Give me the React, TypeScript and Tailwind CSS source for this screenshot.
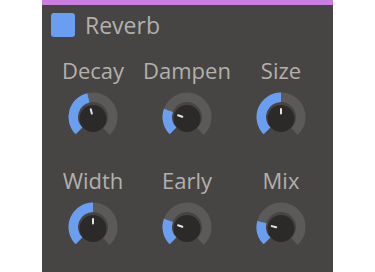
import React from 'react'

type KnobProps = { value: number }

// value 0..1 maps onto a 270° sweep starting bottom-left
function Knob({ value }: KnobProps) {
  const cx = 26
  const cy = 26
  const r = 19.75
  const start = -135
  const end = start + 270 * value
  const pt = (deg: number, rad: number, oy = 0) => {
    const a = (deg * Math.PI) / 180
    return [cx + rad * Math.sin(a), cy + oy - rad * Math.cos(a)]
  }
  const arc = (a0: number, a1: number) => {
    const [x0, y0] = pt(a0, r)
    const [x1, y1] = pt(a1, r)
    const large = a1 - a0 > 180 ? 1 : 0
    return `M ${x0} ${y0} A ${r} ${r} 0 ${large} 1 ${x1} ${y1}`
  }
  const [px0, py0] = pt(end, 5, 1.5)
  const [px1, py1] = pt(end, 9.5, 1.5)

  return (
    <svg width="52" height="52" viewBox="0 0 52 52">
      <path d={arc(start, 137)} fill="none" stroke="#5b5a58" strokeWidth="9.5" />
      {value > 0 && <path d={arc(start, end)} fill="none" stroke="#6a9ef0" strokeWidth="9.5" />}
      <circle cx={cx} cy={cy + 1.5} r="13.5" fill="#2b2a29" />
      <line x1={px0} y1={py0} x2={px1} y2={py1} stroke="#e6e4e0" strokeWidth="2" strokeLinecap="round" />
    </svg>
  )
}

const rows = [
  [
    { label: 'Decay', value: 0.45 },
    { label: 'Dampen', value: 0.24 },
    { label: 'Size', value: 0.5 },
  ],
  [
    { label: 'Width', value: 0.5 },
    { label: 'Early', value: 0.24 },
    { label: 'Mix', value: 0.22 },
  ],
]

export default function App() {
  return (
    <div className="h-[272px] w-[375px] overflow-hidden bg-white" style={{ fontFamily: '"Open Sans", sans-serif' }}>
      <div className="ml-[42px] h-[272px] w-[291px] bg-[#464543]">
        <div className="h-[5px] bg-[#c97ee0]" />
        <div className="flex items-center gap-[10px] pl-[9px] pt-[8px]">
          <div className="h-[24px] w-[24px] rounded-[3px] bg-[#6a9ef0]" />
          <span className="text-[23px] leading-[24px] text-[#b3b0ad]">Reverb</span>
        </div>
        <div className="ml-[4px] mt-[20px] flex flex-col gap-[24px]">
          {rows.map((row, i) => (
            <div key={i} className="grid w-[282px] grid-cols-3">
              {row.map((k) => (
                <div key={k.label} className="flex flex-col items-center">
                  <span className="text-[22px] leading-[26px] text-[#b3b0ad]">{k.label}</span>
                  <div className="mt-[8px]">
                    <Knob value={k.value} />
                  </div>
                </div>
              ))}
            </div>
          ))}
        </div>
      </div>
    </div>
  )
}
